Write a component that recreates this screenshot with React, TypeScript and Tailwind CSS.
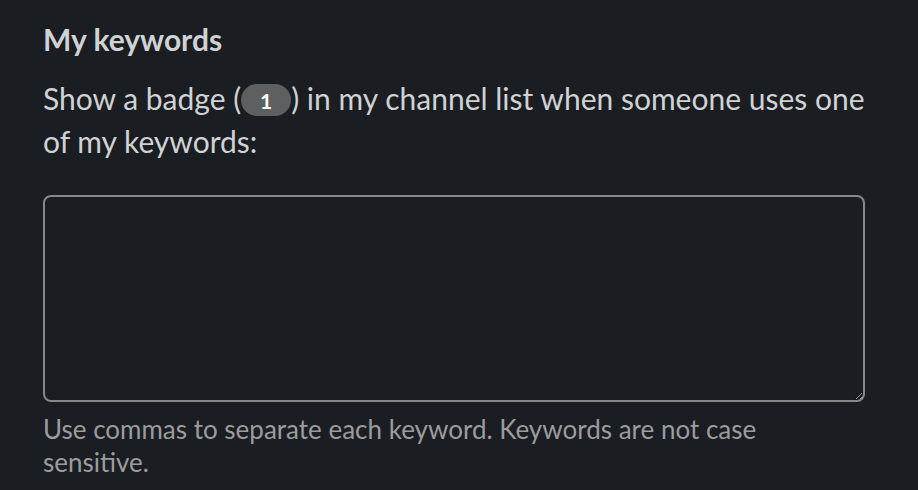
import React from 'react';

export default function App() {
  return (
    <div className="w-[918px] h-[490px] overflow-hidden bg-[#1a1d21] font-['Lato','Noto_Sans',sans-serif] text-[#d1d2d3]">
      <div className="px-[43px] pt-[20px] w-[918px]">
        <h2 className="text-[30px] leading-[38px] font-bold">My keywords</h2>
        <p className="mt-[19px] w-[832px] text-[30px] leading-[43px]">
          Show a badge (
          <span className="inline-flex items-center justify-center align-middle -mt-[4px] w-[50px] h-[32px] rounded-full bg-[#5e5f61] text-white text-[21px] font-bold leading-none">
            1
          </span>
          ) in my channel list when someone uses one of my keywords:
        </p>
        <textarea
          className="block mt-[32px] w-[822px] h-[207px] rounded-[8px] border-[2px] border-[#87888a] bg-transparent outline-none"
          defaultValue=""
        />
        <p className="mt-[11px] w-[772px] text-[26px] leading-[33px] text-[#9b9c9e]">
          Use commas to separate each keyword. Keywords are not case sensitive.
        </p>
      </div>
    </div>
  );
}
